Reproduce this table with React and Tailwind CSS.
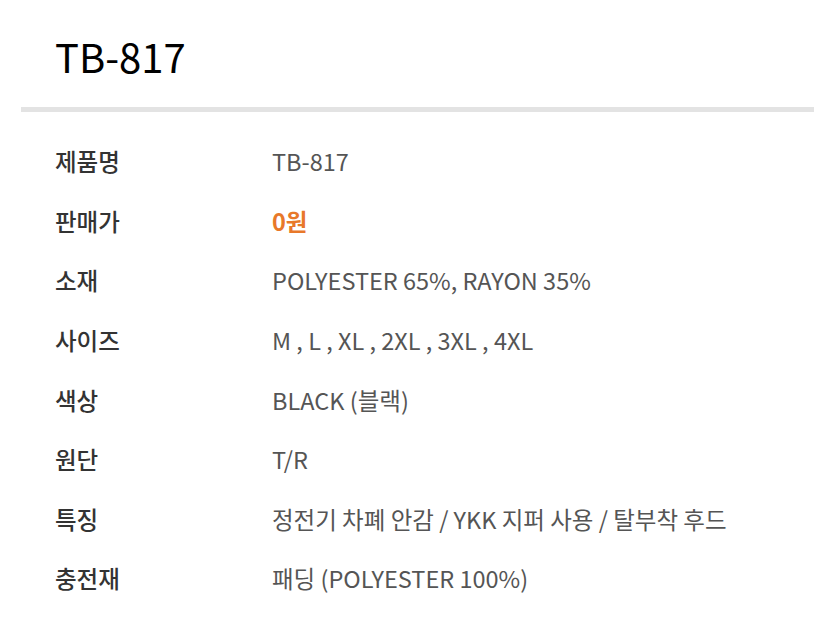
import React from "react";

const rows = [
  { label: "제품명", value: "TB-817" },
  { label: "판매가", value: "0원", price: true },
  { label: "소재", value: "POLYESTER 65%, RAYON 35%" },
  { label: "사이즈", value: "M , L , XL , 2XL , 3XL , 4XL" },
  { label: "색상", value: "BLACK (블랙)" },
  { label: "원단", value: "T/R" },
  { label: "특징", value: "정전기 차폐 안감 / YKK 지퍼 사용 / 탈부착 후드" },
  { label: "충전재", value: "패딩 (POLYESTER 100%)" },
];

const App = () => {
  return (
    <div
      className="w-[835px] h-[625px] bg-white px-[21px] overflow-hidden"
      style={{ fontFamily: '"Noto Sans CJK KR", "Noto Sans", sans-serif' }}
    >
      <div className="pl-[34px] pt-[32px] pb-[27px] text-[40px] leading-[48px] text-black">
        TB-817
      </div>
      <div className="h-[5px] bg-[#e3e3e3]" />

      <div className="pt-[20px]">
        {rows.map((row, index) => (
          <div key={index} className="flex items-center h-[59.6px]">
            <div className="w-[251px] pl-[34px] text-[23.5px] font-medium text-[#333333]">
              {row.label}
            </div>
            <div
              className={
                row.price
                  ? "text-[23.5px] font-bold text-[#e8782a]"
                  : "text-[23.5px] text-[#555555]"
              }
            >
              {row.value}
            </div>
          </div>
        ))}
      </div>
    </div>
  );
};

export default App;
